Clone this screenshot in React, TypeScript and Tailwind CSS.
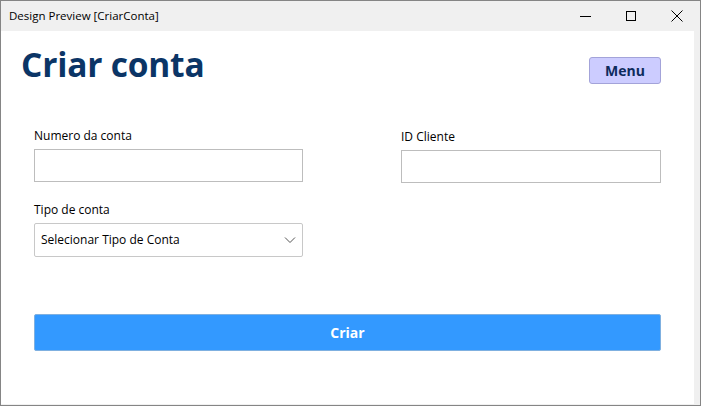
import React from "react";

const font = { fontFamily: '"Open Sans", "Noto Sans", Arial, sans-serif' };

function Field({ label, className }: { label: string; className?: string }) {
  return (
    <div className={className}>
      <div className="text-[12px] leading-[16px] text-black mb-[5px]">{label}</div>
      <div className="h-[33px] border border-[#bdbdbd] bg-white" />
    </div>
  );
}

export default function App() {
  return (
    <div className="w-[701px] h-[406px] bg-[#f0f0f0] border border-[#858585] flex flex-col overflow-hidden" style={font}>
      <div className="h-[30px] flex items-center pl-[8px] shrink-0">
        <span className="text-[11.5px] text-black flex-1">Design Preview [CriarConta]</span>
        <div className="flex items-center h-full">
          <div className="w-[46px] flex justify-center">
            <div className="w-[11px] h-px bg-black" />
          </div>
          <div className="w-[46px] flex justify-center">
            <div className="w-[10px] h-[10px] border border-black" />
          </div>
          <div className="w-[46px] flex justify-center">
            <svg width="12" height="12" viewBox="0 0 12 12">
              <path d="M0.5 0.5 L11.5 11.5 M11.5 0.5 L0.5 11.5" stroke="#000" strokeWidth="1" />
            </svg>
          </div>
        </div>
      </div>
      <div className="flex-1 bg-white mr-[6px] mb-[1px] flex flex-col pl-[20px] pr-[33px]">
        <div className="flex items-start justify-between pt-[9px]">
          <h1 className="text-[33.5px] leading-[48px] font-bold text-[#0b3566] tracking-[-0.2px]">Criar conta</h1>
          <button className="mt-[17px] w-[72px] h-[27px] rounded-[3px] bg-[#ccccff] border border-[#a3a3d9] text-[14px] font-bold text-[#0d2b5c]">
            Menu
          </button>
        </div>
        <div className="pl-[13px] mt-[40px] flex items-start">
          <Field label="Numero da conta" className="w-[269px]" />
          <Field label="ID Cliente" className="w-[260px] ml-[98px] mt-[1px]" />
        </div>
        <div className="pl-[13px] mt-[19px]">
          <div className="text-[12px] leading-[16px] text-black mb-[5px]">Tipo de conta</div>
          <div className="w-[269px] h-[34px] border border-[#c8c8c8] rounded-[2px] flex items-center justify-between pl-[6px] pr-[6px]">
            <span className="text-[12px] text-black">Selecionar Tipo de Conta</span>
            <svg width="12" height="8" viewBox="0 0 12 8">
              <path d="M1 1.5 L6 6.5 L11 1.5" fill="none" stroke="#555" strokeWidth="1" />
            </svg>
          </div>
        </div>
        <div className="pl-[13px] mt-[57px]">
          <button className="w-full h-[37px] bg-[#3399ff] border border-[#7fb0e0] rounded-[2px] text-white text-[14px] font-bold">
            Criar
          </button>
        </div>
      </div>
    </div>
  );
}
